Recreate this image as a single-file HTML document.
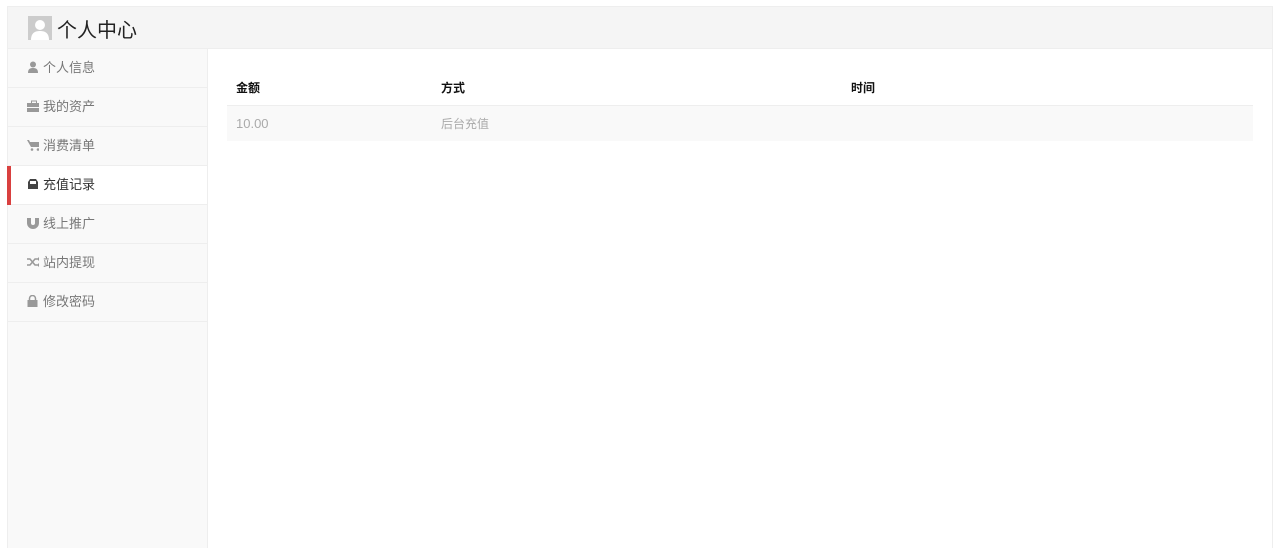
<!DOCTYPE html>
<html><head><meta charset="utf-8"><style>
*{margin:0;padding:0;box-sizing:border-box}
body{width:1280px;height:548px;background:#fff;font-family:"Liberation Sans","Noto Sans CJK SC",sans-serif;overflow:hidden;position:relative}
.wrap{position:absolute;left:7px;top:6px;width:1266px;height:542px;border:1px solid #eee;border-bottom:none;background:#fff}
.hd{height:42px;background:#f5f5f5;border-bottom:1px solid #eee;position:relative}
.hd .av{position:absolute;left:20px;top:9px;width:24px;height:24px;background:#ccc;overflow:hidden}
.hd .t{position:absolute;left:49px;top:7px;font-size:20px;color:#222}
.sb{position:absolute;left:0;top:42px;width:200px;bottom:0;background:#f9f9f9;border-right:1px solid #eee}
.it{height:39px;border-bottom:1px solid #eee;font-size:13px;color:#777;padding-left:19px;line-height:38px;position:relative}
.it.on{background:#fff;color:#333}
.it.on:before{content:"";position:absolute;left:-1px;top:0;width:4px;height:39px;background:#d9403f}
.ic{display:inline-block;width:12px;margin-right:4px;vertical-align:-1px}
table{position:absolute;left:219px;top:63px;width:1026px;border-collapse:collapse;font-size:12px}
th{text-align:left;height:35px;font-weight:bold;color:#111;padding-left:9px;border-bottom:1px solid #eee}
td{height:36px;background:#f9f9f9;color:#aaa;padding-left:9px}
</style></head><body>
<div class="wrap">
<div class="hd"><div class="av"><svg width="24" height="24"><circle cx="12" cy="9" r="5" fill="#fff"/><path d="M3 24c0-7 4-9 9-9s9 2 9 9z" fill="#fff"/></svg></div><div class="t">个人中心</div></div>
<div class="sb">
<div class="it"><svg class="ic" width="12" height="12"><circle cx="6" cy="3.5" r="3" fill="#999"/><path d="M1 12c0-4 2-5 5-5s5 1 5 5z" fill="#999"/></svg>个人信息</div>
<div class="it"><svg class="ic" width="14" height="12"><rect x="0" y="3" width="14" height="9" fill="#999"/><rect x="4.5" y="1" width="5" height="3" fill="none" stroke="#999"/><rect x="0" y="7" width="14" height="1" fill="#f9f9f9"/></svg>我的资产</div>
<div class="it"><svg class="ic" width="13" height="12"><path d="M0 1h2l1 2h10l-1 5H4z" fill="#999"/><circle cx="5" cy="10.5" r="1.3" fill="#999"/><circle cx="11" cy="10.5" r="1.3" fill="#999"/></svg>消费清单</div>
<div class="it on"><svg class="ic" width="12" height="12"><path d="M1 4l2-3h6l2 3v7H1z" fill="#444"/><rect x="3" y="3" width="6" height="3" fill="#fff"/></svg>充值记录</div>
<div class="it"><svg class="ic" width="12" height="12"><path d="M0 1h4v5a2 2 0 004 0V1h4v5a6 6 0 01-12 0z" fill="#999"/></svg>线上推广</div>
<div class="it"><svg class="ic" width="13" height="12"><path d="M0 3h3l5 6h3M0 9h3l5-6h3" fill="none" stroke="#999" stroke-width="1.5"/><path d="M11 1l2 2-2 2zM11 7l2 2-2 2z" fill="#999"/></svg>站内提现</div>
<div class="it"><svg class="ic" width="11" height="12"><rect x="0.5" y="5" width="10" height="7" fill="#999"/><path d="M2.5 5V3.5a3 3 0 016 0V5" fill="none" stroke="#999" stroke-width="1.5"/></svg>修改密码</div>
</div>
<table><tr><th style="width:205px">金额</th><th style="width:410px">方式</th><th>时间</th></tr>
<tr><td style="font-size:13px">10.00</td><td>后台充值</td><td></td></tr></table>
</div>
</body></html>
